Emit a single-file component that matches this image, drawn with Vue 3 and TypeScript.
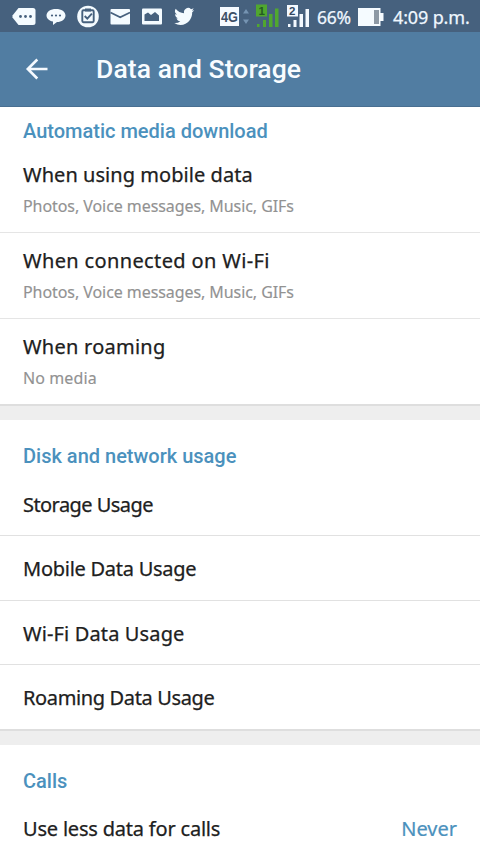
<script setup lang="ts">
interface MediaRow { title: string; detail: string; tracking: number; detailTracking: number }
interface UsageRow { title: string; tracking: number }

const mediaRows: MediaRow[] = [
  { title: 'When using mobile data', detail: 'Photos, Voice messages, Music, GIFs', tracking: 0.05, detailTracking: -0.07 },
  { title: 'When connected on Wi-Fi', detail: 'Photos, Voice messages, Music, GIFs', tracking: 0.36, detailTracking: -0.07 },
  { title: 'When roaming', detail: 'No media', tracking: 0.25, detailTracking: 0.1 },
]
const usageRows: UsageRow[] = [
  { title: 'Storage Usage', tracking: -0.56 },
  { title: 'Mobile Data Usage', tracking: -0.26 },
  { title: 'Wi-Fi Data Usage', tracking: 0.13 },
  { title: 'Roaming Data Usage', tracking: -0.36 },
]
</script>

<template>
  <div class="screen">
    <header class="status">
      <svg class="icons" width="205" height="32" viewBox="0 0 205 32">
        <g fill="#f4fbff">
          <path d="M18.5 8H33a2.5 2.5 0 0 1 2.500 2.500V22.500A2.500 2.500 0 0 1 33 25H18.500L12.500 17.500V15.500Z" />
          <path d="M56 9c5.500 0 9.500 2.700 9.500 6.500S61.500 22 57 22l-4 3v-3.500c-4-.7-6.500-3-6.500-6C46.500 11.700 50.500 9 56 9Z" />
          <circle cx="88" cy="16.500" r="10.800" />
          <rect x="110.500" y="9" width="19.500" height="15.500" rx="1" />
          <rect x="142" y="8.500" width="20" height="16" rx="1" />
          <path transform="translate(174.300 6) scale(.83 .87)" d="M23.950 4.570a10 10 0 0 1-2.820.77 4.960 4.960 0 0 0 2.160-2.720c-.95.550-2 .950-3.130 1.180a4.920 4.920 0 0 0-8.380 4.480C7.690 8.090 4.070 6.130 1.640 3.160a4.820 4.820 0 0 0 1.520 6.570 4.900 4.900 0 0 1-2.230-.61v.06a4.920 4.920 0 0 0 3.950 4.830 5 5 0 0 1-2.210.08 4.940 4.940 0 0 0 4.600 3.420A9.870 9.870 0 0 1 0 19.540a14 14 0 0 0 7.550 2.210c9.050 0 14-7.500 14-13.990v-.63a9.940 9.940 0 0 0 2.400-2.560Z" />
        </g>
        <g fill="#46617e">
          <circle cx="20.500" cy="16.500" r="1.400" /><circle cx="25.500" cy="16.500" r="1.400" /><circle cx="30.500" cy="16.500" r="1.400" />
          <circle cx="52" cy="15.500" r="1.100" /><circle cx="56" cy="15.500" r="1.100" /><circle cx="60" cy="15.500" r="1.100" />
          <path d="M144.500 21V14.500l3.500-2 3 2.500 4-3 4 3.500V21Z" />
          <rect x="85" y="8.500" width="6" height="3" />
        </g>
        <rect x="82.300" y="10.300" width="11.400" height="12" rx="1.200" fill="none" stroke="#46617e" stroke-width="1.900" />
        <path d="m84.700 16 2.600 2.700 4.600-5" fill="none" stroke="#46617e" stroke-width="1.900" />
        <path d="m110.500 12.500 9.700 4.700 9.800-4.700" fill="none" stroke="#46617e" stroke-width="1.800" />
      </svg>
      <svg class="signals" width="95" height="32" viewBox="215 0 95 32">
        <rect x="220" y="7" width="19" height="19" fill="#f5faff" />
        <text x="221" y="21.500" class="net" textLength="17" lengthAdjust="spacingAndGlyphs">4G</text>
        <path d="m243 13.500 3-4.500 3 4.500Zm0 6 3 4.500 3-4.500Z" fill="#7594b2" />
        <g fill="#50a72f">
          <rect x="256" y="4.500" width="11" height="12" />
          <rect x="257" y="24" width="2.500" height="3" /><rect x="263" y="20" width="3" height="7" />
          <rect x="269" y="14" width="3.500" height="13" /><rect x="275" y="8.500" width="3.500" height="18.500" />
        </g>
        <text x="258.500" y="14.800" class="sim dark">1</text>
        <g fill="#f3f9ff">
          <rect x="287" y="5" width="11" height="11.500" />
          <rect x="288" y="24" width="2.500" height="3" /><rect x="293.500" y="20" width="3" height="7" />
          <rect x="299.500" y="14" width="3.500" height="13" /><rect x="305.500" y="9" width="3.500" height="18" />
        </g>
        <text x="289" y="15" class="sim">2</text>
      </svg>
      <span class="percent">66%</span>
      <svg class="battery" width="26" height="18" viewBox="0 0 26 18">
        <path d="M0 0H22.500V5H25.500V13H22.500V18H0Z" fill="#f5fbff" />
        <rect x="16" y="2" width="5" height="14" fill="#8d99a5" />
      </svg>
      <span class="clock">4:09 p.m.</span>
    </header>

    <div class="toolbar">
      <svg width="24" height="24" viewBox="0 0 24 24" fill="none" stroke="#f5faff" stroke-width="2.600">
        <path d="M22.500 12H3M12.300 2.500 2.800 12l9.500 9.500" />
      </svg>
      <h1>Data and Storage</h1>
    </div>

    <section>
      <h2 class="first">Automatic media download</h2>
      <div v-for="row in mediaRows" :key="row.title" class="media">
        <div class="label" :style="{ letterSpacing: row.tracking + 'px' }">{{ row.title }}</div>
        <div class="detail" :style="{ letterSpacing: row.detailTracking + 'px' }">{{ row.detail }}</div>
      </div>
    </section>
    <div class="gap" />
    <section>
      <h2>Disk and network usage</h2>
      <div v-for="row in usageRows" :key="row.title" class="usage lowered">
        <span class="label" :style="{ letterSpacing: row.tracking + 'px' }">{{ row.title }}</span>
      </div>
    </section>
    <div class="gap" />
    <section>
      <h2>Calls</h2>
      <div class="usage">
        <span class="label calls">Use less data for calls</span>
        <span class="value">Never</span>
      </div>
    </section>
  </div>
</template>

<style>
body { margin: 0; }
</style>

<style scoped>
* { box-sizing: border-box; }
.screen { width: 480px; height: 854px; overflow: hidden; background: #fff; font-family: "Noto Sans", sans-serif; color: #202020; }
.status { height: 32px; display: flex; align-items: center; background: #46617e; color: #eff7ff; font-size: 18px; line-height: 32px; white-space: nowrap; }
.status svg { flex: none; }
.signals { margin-left: 10px; }
.net { font: bold 14px "Liberation Sans", sans-serif; fill: #3c4f66; }
.sim { font: bold 11.500px "Liberation Sans", sans-serif; fill: #34485f; }
.dark { fill: #245c22; }
.percent { width: 41px; margin-left: 7px; font-size: 17.500px; letter-spacing: -.2px; padding-top: 2px; -webkit-text-stroke: .25px; }
.battery { margin-top: 1px; }
.clock { margin-left: 9px; padding-top: 2px; letter-spacing: -.15px; -webkit-text-stroke: .25px; }
.toolbar { height: 75px; background: #517da2; display: flex; align-items: center; padding-left: 25px; border-bottom: 1px solid #496f91; }
.toolbar svg { flex: none; }
h1 { margin: 0 0 0 47px; font: 500 26.500px/32px Roboto, sans-serif; letter-spacing: .08px; color: #f8fcff; white-space: nowrap; }
h2 { margin: 0; height: 52px; padding: 22px 0 0 23px; font: 500 20px/28px Roboto, sans-serif; color: #4b91bd; white-space: nowrap; }
h2.first { height: 40px; padding-top: 10px; }
.label { font-size: 20px; line-height: 28px; white-space: nowrap; -webkit-text-stroke: .25px; }
.calls { letter-spacing: -.2px; }
.media { height: 86px; padding: 14px 23px 0; border-bottom: 1px solid #e5e5e5; }
.media:last-child { height: 85px; }
.media:last-child, .usage:last-child { border-bottom: 0; }
.detail { margin-top: 4px; font-size: 16px; line-height: 26px; color: #929292; white-space: nowrap; -webkit-text-stroke: .15px; }
.gap { height: 16px; background: #eee; border-top: 2px solid #dedede; }
.usage { display: flex; justify-content: space-between; align-items: center; height: 64.330px; padding: 0 23px; border-bottom: 1px solid #e1e1e1; }
.lowered { padding-top: 2.500px; }
.value { font-size: 20px; line-height: 28px; color: #4b91bd; -webkit-text-stroke: .2px; }
</style>
